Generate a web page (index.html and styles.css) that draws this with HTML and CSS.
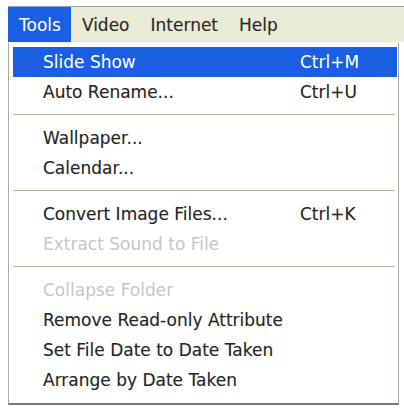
FILE: index.html
```html
<!DOCTYPE html>
<html lang="en">
<head>
<meta charset="utf-8">
<title>Tools menu</title>
<link rel="stylesheet" href="styles.css">
</head>
<body>
<div class="screen">
  <div class="menubar">
    <span class="mb-item active">Tools</span>
    <span class="mb-item">Video</span>
    <span class="mb-item">Internet</span>
    <span class="mb-item">Help</span>
  </div>
  <div class="menu">
    <div class="item hl"><span class="label">Slide Show</span><span class="key">Ctrl+M</span></div>
    <div class="item"><span class="label">Auto Rename...</span><span class="key">Ctrl+U</span></div>
    <div class="sep"></div>
    <div class="item"><span class="label">Wallpaper...</span></div>
    <div class="item"><span class="label">Calendar...</span></div>
    <div class="sep"></div>
    <div class="item"><span class="label">Convert Image Files...</span><span class="key">Ctrl+K</span></div>
    <div class="item disabled"><span class="label">Extract Sound to File</span></div>
    <div class="sep"></div>
    <div class="item disabled"><span class="label">Collapse Folder</span></div>
    <div class="item"><span class="label">Remove Read-only Attribute</span></div>
    <div class="item"><span class="label">Set File Date to Date Taken</span></div>
    <div class="item"><span class="label">Arrange by Date Taken</span></div>
  </div>
</div>
</body>
</html>
```
FILE: styles.css
```css
html, body {
  margin: 0;
  padding: 0;
  background: #ffffff;
}

body {
  font-family: "DejaVu Sans", "Liberation Sans", sans-serif;
  font-size: 17px;
  color: #262626;
  text-shadow: 0 0 1px rgba(0, 0, 0, 0.2);
}

.screen {
  padding: 6px 0 0 8px;
}

.menubar {
  display: flex;
  height: 35px;
  background: #ebecd8;
  border-top: 1px solid #9c9fb4;
}

.mb-item {
  display: flex;
  align-items: center;
  padding: 0 10px 0 11px;
  color: #2a2a2a;
}

.mb-item.active {
  background: #1a5fe2;
  color: #ffffff;
  text-shadow: none;
}

.menu {
  box-sizing: border-box;
  width: 391px;
  border: 1px solid #a9a9a2;
  border-bottom: 2px solid #7a7a74;
  border-top: 1px solid #f4f4f0;
  padding: 4px 1px 8px 4px;
  background: #ffffff;
}

.item {
  display: grid;
  grid-template-columns: 257px auto;
  height: 30px;
  align-items: center;
  padding-left: 30px;
}

.item.hl {
  background: #1a5fe2;
  color: #ffffff;
  text-shadow: none;
}

.item.disabled {
  color: #c6c6c6;
  text-shadow: none;
}

.sep {
  height: 1px;
  background: #b7b5aa;
  margin: 7px 2px 8px 0;
}
```
